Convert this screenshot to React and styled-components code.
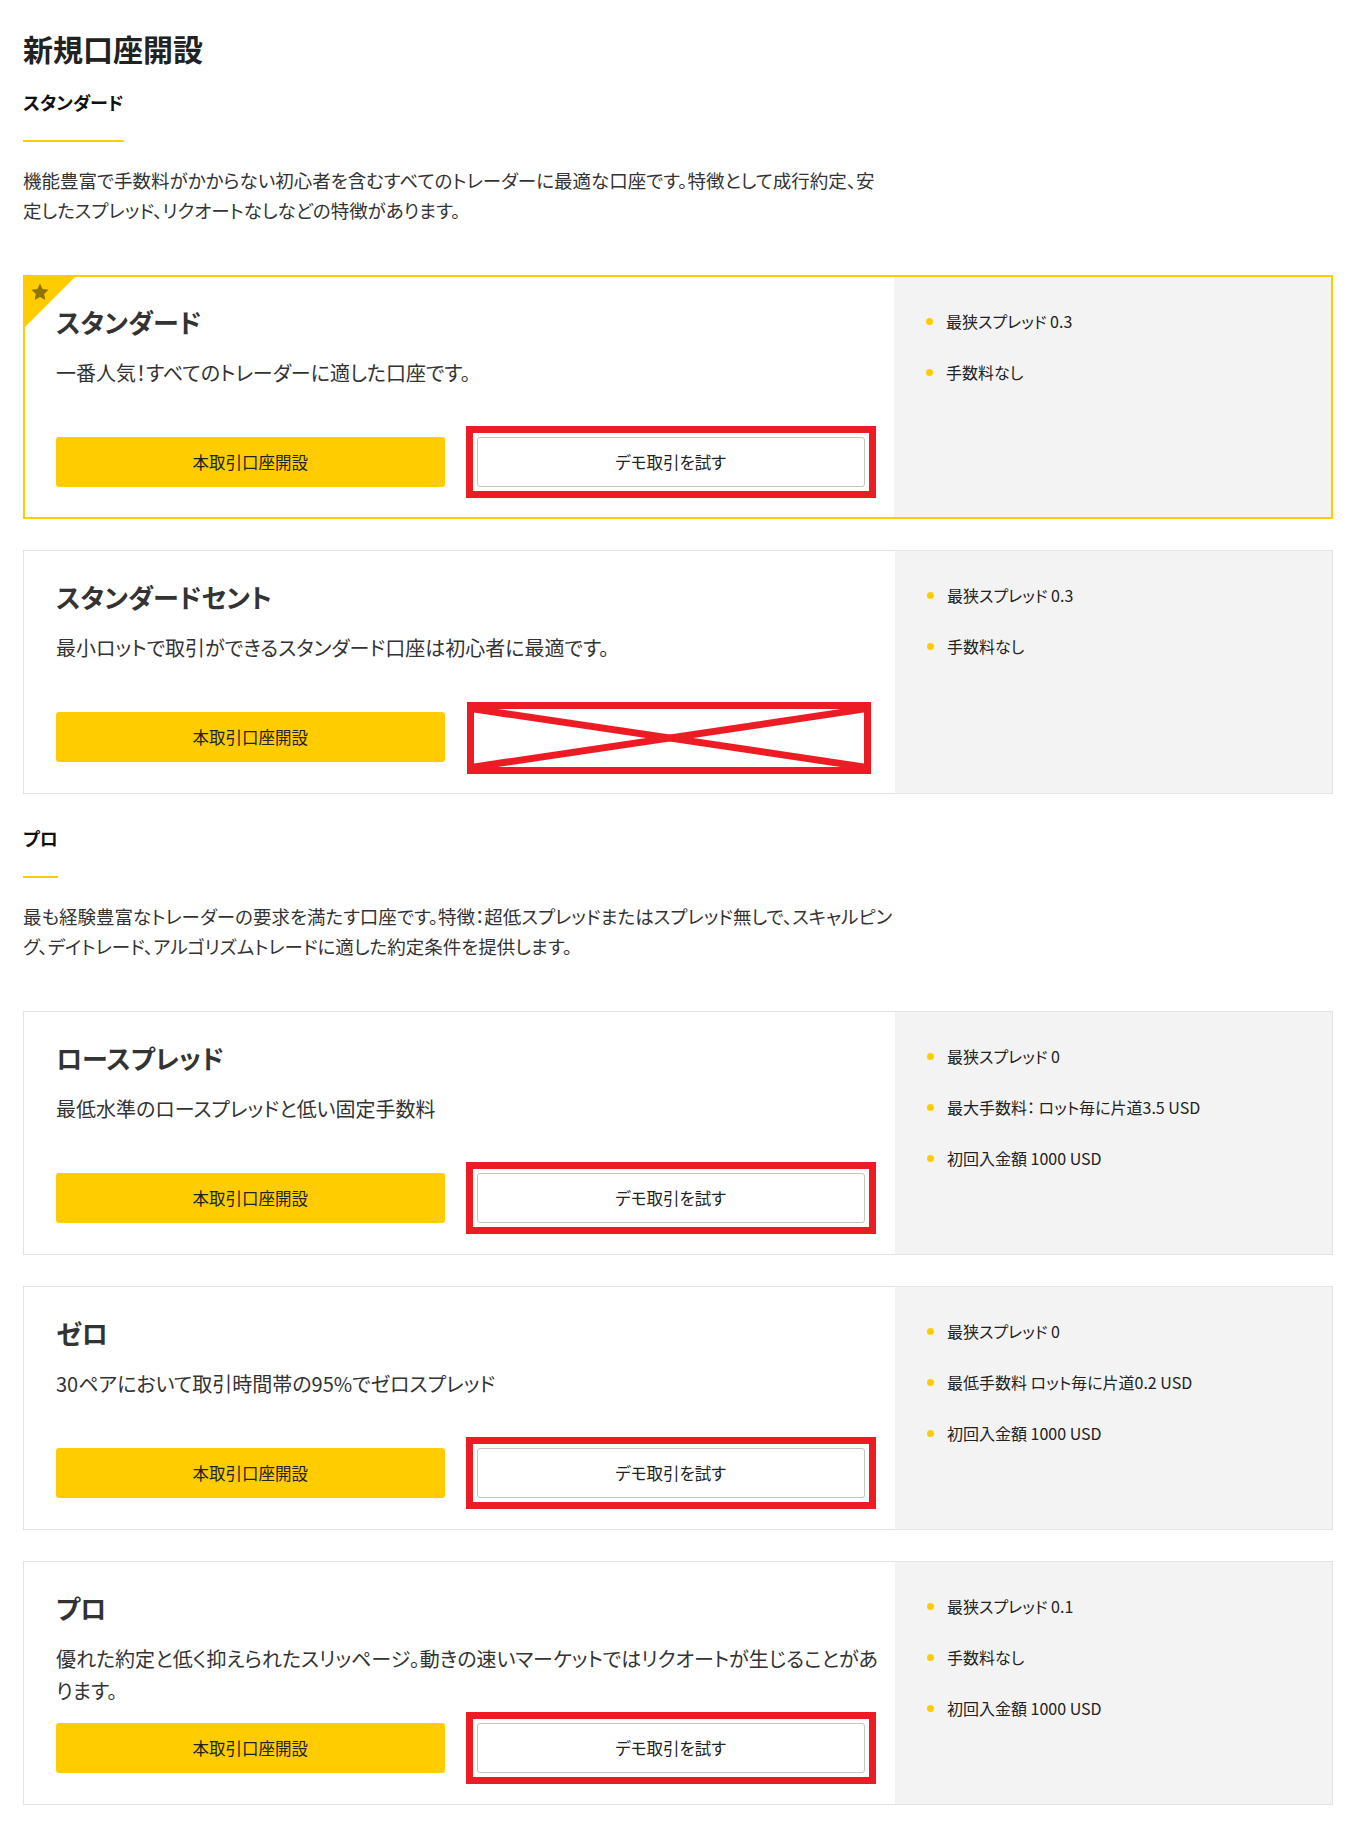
import React from "react";
import styled, { createGlobalStyle } from "styled-components";

const GlobalStyle = createGlobalStyle`
    body {
        margin: 0;
        background: #fff;
        color: #333;
        font-family: "Noto Sans CJK JP", "Noto Sans", sans-serif;
        font-feature-settings: "palt";
    }
`;

const Page = styled.div`
    padding: 27px 22px 24px 23px;
    h1 {
        margin: 0;
        font-size: 30px;
        line-height: 42px;
        font-weight: 700;
        color: #222;
    }
`;

const SectionTitle = styled.h2`
    display: inline-block;
    margin: ${(p) => p.$top}px 0 0;
    padding-bottom: 24px;
    border-bottom: 2px solid #ffcc00;
    font-size: 18px;
    line-height: 27px;
    font-weight: 700;
    color: #111;
`;

const Lead = styled.p`
    margin: 23px 0 50px;
    font-size: 18.5px;
    line-height: 30px;
    color: #333;
`;

const CardList = styled.div`
    display: flex;
    flex-direction: column;
    gap: 31px;
`;

const Card = styled.div`
    position: relative;
    display: grid;
    grid-template-columns: minmax(0, 1fr) 437px;
    border: ${(p) => (p.$featured ? "2px solid #ffcc00" : "1px solid #e3e3e3")};
`;

const Ribbon = styled.div`
    position: absolute;
    top: -2px;
    left: -2px;
    width: 54px;
    height: 54px;
    background: #ffcc00;
    clip-path: polygon(0 0, 100% 0, 0 100%);
    svg {
        position: absolute;
        top: 7px;
        left: 7px;
    }
`;

const Main = styled.div`
    display: flex;
    flex-direction: column;
    padding: ${(p) => (p.$featured ? "26px 29px 30px 31px" : "27px 30px 31px 32px")};
    h3 {
        margin: 0;
        font-size: 26px;
        line-height: 38px;
        font-weight: 700;
        color: #333;
    }
`;

const Desc = styled.p`
    margin: 16px 0 16px;
    min-height: 64px;
    font-size: 20px;
    line-height: 32px;
    white-space: nowrap;
    color: #333;
`;

const Actions = styled.div`
    display: grid;
    grid-template-columns: 1fr 1fr;
    gap: 32px;
`;

const Button = styled.a`
    display: flex;
    align-items: center;
    justify-content: center;
    height: 50px;
    box-sizing: border-box;
    border-radius: 3px;
    font-size: 16.5px;
    color: #222;
    text-decoration: none;
    background: ${(p) => (p.$primary ? "#ffcc00" : "#fff")};
    border: ${(p) => (p.$primary ? "none" : "1px solid #c4c4c4")};
`;

const Marked = styled.div`
    margin: -11px;
    padding: 4px;
    border: 7px solid #ed1c24;
`;

const Crossed = styled.div`
    margin: -10px -6px -12px -10px;
    height: 72px;
    box-sizing: border-box;
    border: 7px solid #ed1c24;
    svg {
        display: block;
        width: 100%;
        height: 100%;
    }
`;

const Side = styled.ul`
    margin: 0;
    padding: 32px 30px 32px 32px;
    list-style: none;
    background: #f3f3f3;
    display: flex;
    flex-direction: column;
    gap: 27px;
`;

const Feature = styled.li`
    display: flex;
    align-items: center;
    gap: 13px;
    font-size: 16px;
    line-height: 24px;
    color: #222;
    &::before {
        content: "";
        width: 7px;
        height: 7px;
        border-radius: 50%;
        background: #ffcc00;
        flex: none;
    }
`;

const Star = () => (
    <svg width="20" height="20" viewBox="0 0 24 24">
        <path
            fill="#8f7400"
            d="M12 1.8l3.1 6.6 7.2.9-5.3 5 1.4 7.2L12 18l-6.4 3.5L7 14.3 1.7 9.3l7.2-.9z"
        />
    </svg>
);

const standard = [
    {
        title: "スタンダード",
        desc: ["一番人気！すべてのトレーダーに適した口座です。"],
        features: ["最狭スプレッド 0.3", "手数料なし"],
        featured: true,
        demo: "marked",
    },
    {
        title: "スタンダードセント",
        desc: ["最小ロットで取引ができるスタンダード口座は初心者に最適です。"],
        features: ["最狭スプレッド 0.3", "手数料なし"],
        demo: "crossed",
    },
];

const pro = [
    {
        title: "ロースプレッド",
        desc: ["最低水準のロースプレッドと低い固定手数料"],
        features: ["最狭スプレッド 0", "最大手数料： ロット毎に片道3.5 USD", "初回入金額 1000 USD"],
        demo: "marked",
    },
    {
        title: "ゼロ",
        desc: ["30ペアにおいて取引時間帯の95%でゼロスプレッド"],
        features: ["最狭スプレッド 0", "最低手数料 ロット毎に片道0.2 USD", "初回入金額 1000 USD"],
        demo: "marked",
    },
    {
        title: "プロ",
        desc: [
            "優れた約定と低く抑えられたスリッページ。動きの速いマーケットではリクオートが生じることがあ",
            "ります。",
        ],
        features: ["最狭スプレッド 0.1", "手数料なし", "初回入金額 1000 USD"],
        demo: "marked",
    },
];

const Lines = ({ lines }) =>
    lines.map((l, i) => (
        <React.Fragment key={i}>
            {i > 0 && <br />}
            {l}
        </React.Fragment>
    ));

const AccountCard = ({ item }) => (
    <Card $featured={item.featured}>
        {item.featured && (
            <Ribbon>
                <Star />
            </Ribbon>
        )}
        <Main $featured={item.featured}>
            <h3>{item.title}</h3>
            <Desc>
                <Lines lines={item.desc} />
            </Desc>
            <Actions>
                <Button $primary href="#">本取引口座開設</Button>
                {item.demo === "crossed" ? (
                    <Crossed>
                        <svg viewBox="0 0 100 100" preserveAspectRatio="none">
                            <line x1="0" y1="0" x2="100" y2="100" stroke="#ed1c24" strokeWidth="7" vectorEffect="non-scaling-stroke" />
                            <line x1="0" y1="100" x2="100" y2="0" stroke="#ed1c24" strokeWidth="7" vectorEffect="non-scaling-stroke" />
                        </svg>
                    </Crossed>
                ) : (
                    <Marked>
                        <Button href="#">デモ取引を試す</Button>
                    </Marked>
                )}
            </Actions>
        </Main>
        <Side>
            {item.features.map((f) => (
                <Feature key={f}>{f}</Feature>
            ))}
        </Side>
    </Card>
);

const App = () => {
    return (
        <>
            <GlobalStyle />
            <Page>
                <h1>新規口座開設</h1>
                <SectionTitle $top={20}>スタンダード</SectionTitle>
                <Lead>
                    <Lines
                        lines={[
                            "機能豊富で手数料がかからない初心者を含むすべてのトレーダーに最適な口座です。特徴として成行約定、安",
                            "定したスプレッド、リクオートなしなどの特徴があります。",
                        ]}
                    />
                </Lead>
                <CardList>
                    {standard.map((item) => (
                        <AccountCard key={item.title} item={item} />
                    ))}
                </CardList>
                <SectionTitle $top={31}>プロ</SectionTitle>
                <Lead>
                    <Lines
                        lines={[
                            "最も経験豊富なトレーダーの要求を満たす口座です。特徴：超低スプレッドまたはスプレッド無しで、スキャルピン",
                            "グ、デイトレード、アルゴリズムトレードに適した約定条件を提供します。",
                        ]}
                    />
                </Lead>
                <CardList>
                    {pro.map((item) => (
                        <AccountCard key={item.title} item={item} />
                    ))}
                </CardList>
            </Page>
        </>
    );
};

export default App;
